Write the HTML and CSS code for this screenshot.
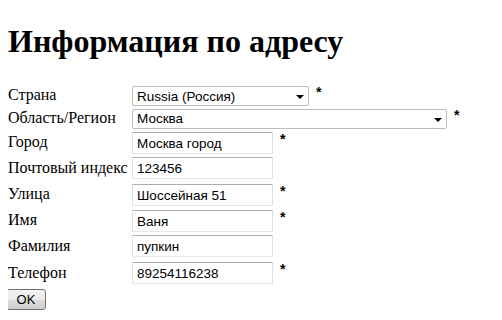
FILE: index.html
```html
<!DOCTYPE html>
<html lang="ru">

<head>
    <meta charset="UTF-8">
    <meta name="viewport" content="width=device-width, initial-scale=1.0">
    <link rel="stylesheet" href="styles.css">
    <title>Информация по адресу</title>
</head>

<body>
    <h1>Информация по адресу</h1>
    <form class="address-form">
        <table class="fields">
            <tr class="row-select">
                <td class="label">Страна</td>
                <td>
                    <span class="select short"><select><option>Russia (Россия)</option></select></span>
                    <span class="req">*</span>
                </td>
            </tr>
            <tr class="row-select">
                <td class="label">Область/Регион</td>
                <td>
                    <span class="select long"><select><option>Москва</option></select></span>
                    <span class="req">*</span>
                </td>
            </tr>
            <tr>
                <td class="label">Город</td>
                <td><input type="text" value="Москва город"> <span class="req">*</span></td>
            </tr>
            <tr>
                <td class="label">Почтовый индекс</td>
                <td><input type="text" value="123456"></td>
            </tr>
            <tr>
                <td class="label">Улица</td>
                <td><input type="text" value="Шоссейная 51"> <span class="req">*</span></td>
            </tr>
            <tr>
                <td class="label">Имя</td>
                <td><input type="text" value="Ваня"> <span class="req">*</span></td>
            </tr>
            <tr>
                <td class="label">Фамилия</td>
                <td><input type="text" value="пупкин"></td>
            </tr>
            <tr>
                <td class="label">Телефон</td>
                <td><input type="text" value="89254116238"> <span class="req">*</span></td>
            </tr>
        </table>
        <button type="submit" class="btn-ok">OK</button>
    </form>
</body>

</html>
```
FILE: styles.css
```css
body {
    margin: 8px;
    font-family: "Liberation Serif", "Times New Roman", serif;
    font-size: 16px;
    color: #000;
    background-color: #fff;
}

h1 {
    font-size: 32px;
    font-weight: bold;
    margin: 15px 0 24px 0;
}

.fields {
    border-collapse: collapse;
    margin-left: -1px;
}

.fields td {
    padding: 0;
    height: 26px;
    vertical-align: middle;
    white-space: nowrap;
}

.fields .row-select td {
    height: 22px;
}

.fields .row-select + .row-select td {
    height: 23px;
}

.fields tr:last-child td {
    height: 27px;
}

.fields td.label {
    padding-left: 1px;
    width: 124px;
}

input,
select {
    font-family: "Liberation Sans", Arial, sans-serif;
    font-size: 13.5px;
    color: #000;
}

input {
    box-sizing: border-box;
    width: 141px;
    height: 22px;
    padding: 1px 4px 0 4px;
    border: 1px solid #dbdfe6;
    border-top-color: #abadb3;
    border-bottom-color: #e3e9ef;
    border-radius: 1px;
    outline: none;
    vertical-align: middle;
}

.select {
    position: relative;
    display: inline-block;
    vertical-align: middle;

    select {
        appearance: none;
        -webkit-appearance: none;
        box-sizing: border-box;
        height: 20px;
        padding: 0 20px 0 4px;
        border: 1px solid #bcbcbc;
        border-radius: 2px;
        background-color: #fff;
        outline: none;
        display: block;
    }
}

.select::after {
    content: "";
    position: absolute;
    right: 5px;
    top: 9px;
    border-left: 4px solid transparent;
    border-right: 4px solid transparent;
    border-top: 4px solid #000;
    pointer-events: none;
}

.select.short select {
    width: 177px;
}

.select.long select {
    width: 315px;
}

.req {
    font-family: "Liberation Sans", Arial, sans-serif;
    font-weight: bold;
    font-size: 14px;
    margin-left: 3px;
    vertical-align: 3px;
}

.btn-ok {
    margin-left: -2px;
    margin-top: 3px;
    width: 40px;
    height: 21px;
    padding: 0;
    font-family: "Liberation Sans", Arial, sans-serif;
    font-size: 13px;
    color: #000;
    border: 1px solid #707070;
    border-radius: 3px;
    background: linear-gradient(to bottom, #f2f2f2 0%, #ebebeb 50%, #dddddd 51%, #cfcfcf 100%);
    cursor: pointer;
}
```
